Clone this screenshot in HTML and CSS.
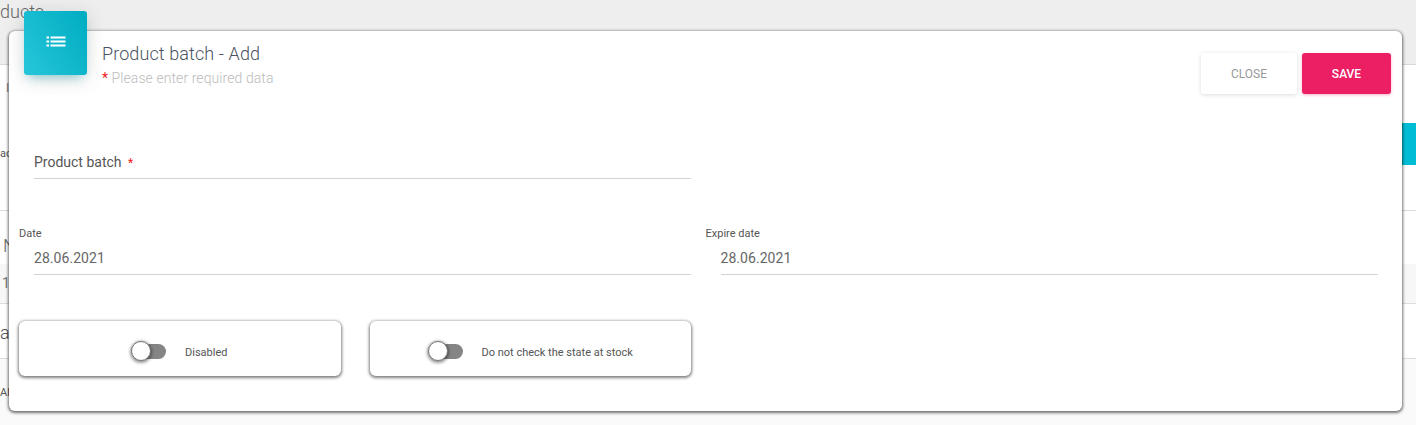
FILE: index.html
```html
<!DOCTYPE html>
<html lang="en">
<head>
    <meta charset="UTF-8">
    <meta name="viewport" content="width=device-width, initial-scale=1.0">
    <title>Product batch - Add</title>
    <link rel="stylesheet" href="styles.css">
</head>
<body>
    <!-- page behind the dialog, only its edges show -->
    <div class="backdrop">
        <div class="top-band"><span class="page-title">ducts</span></div>
        <div class="bg-toolbar">
            <span class="bg-tick">I</span>
            <div class="bg-action"></div>
            <span class="bg-small">ac</span>
        </div>
        <div class="bg-head"><span class="bg-big">N</span></div>
        <div class="bg-row"><span class="bg-num">1</span></div>
        <div class="bg-name"><span class="bg-large">a</span></div>
        <div class="bg-last"><span class="bg-small">AM</span></div>
    </div>

    <div class="modal">
        <div class="modal-tile">
            <svg width="20" height="20" viewBox="0 0 20 20" fill="#fff">
                <rect x="0.5" y="3.5" width="2.5" height="2"/>
                <rect x="4.5" y="3.5" width="15" height="2"/>
                <rect x="0.5" y="7.5" width="2.5" height="2"/>
                <rect x="4.5" y="7.5" width="15" height="2"/>
                <rect x="0.5" y="11.5" width="2.5" height="2"/>
                <rect x="4.5" y="11.5" width="15" height="2"/>
            </svg>
        </div>

        <div class="modal-header">
            <div class="modal-heading">
                <h4 class="modal-title">Product batch - Add</h4>
                <p class="modal-sub"><span class="req">*</span> Please enter required data</p>
            </div>
            <div class="modal-actions">
                <button class="btn btn-close">Close</button>
                <button class="btn btn-save">Save</button>
            </div>
        </div>

        <div class="form-grid">
            <div class="field field-plain">
                <span class="field-text">Product batch <span class="req req-field">*</span></span>
            </div>
        </div>

        <div class="form-grid date-row">
            <div class="date-col">
                <label class="small-label">Date</label>
                <div class="field"><span class="field-value">28.06.2021</span></div>
            </div>
            <div class="date-col">
                <label class="small-label">Expire date</label>
                <div class="field"><span class="field-value">28.06.2021</span></div>
            </div>
        </div>

        <div class="toggle-row">
            <div class="toggle-card">
                <div class="toggle-wrap toggle-wrap-a">
                    <span class="toggle"><span class="toggle-knob"></span></span>
                    <span class="toggle-label">Disabled</span>
                </div>
            </div>
            <div class="toggle-card">
                <div class="toggle-wrap toggle-wrap-b">
                    <span class="toggle"><span class="toggle-knob"></span></span>
                    <span class="toggle-label">Do not check the state at stock</span>
                </div>
            </div>
        </div>
    </div>
</body>
</html>
```

FILE: styles.css
```css
html, body {
    height: 425px;
    overflow: hidden;
}
body {
    margin: 0;
    font-family: Roboto, "Liberation Sans", sans-serif;
    background-color: #fafafa;
    color: #555;
}

/* backdrop */
.backdrop {
    height: 425px;
}
.top-band {
    height: 64px;
    background-color: #eeeeee;
    border-bottom: 1px solid #d8d8d8;
    color: #666;
}
.page-title {
    display: block;
    padding-top: 1px;
    font-size: 18px;
    font-weight: 300;
    line-height: 22px;
}
.bg-toolbar {
    height: 145px;
    background-color: #fff;
    border-bottom: 1px solid #ddd;
    position: relative;
}
.bg-tick {
    display: block;
    height: 58px;
    padding-top: 16px;
    margin-left: 6px;
    font-size: 12px;
    color: #888;
    box-sizing: border-box;
}
.bg-action {
    height: 42px;
    margin-left: auto;
    width: 40px;
    background-color: #00bcd4;
}
.bg-toolbar .bg-small {
    position: absolute;
    left: 0;
    top: 82px;
}
.bg-small {
    font-size: 11px;
    color: #555;
}
.bg-head {
    height: 53px;
    background-color: #fff;
}
.bg-big {
    display: block;
    margin-left: 3px;
    padding-top: 24px;
    font-size: 18px;
    line-height: 22px;
    font-weight: 300;
    color: #666;
}
.bg-row {
    height: 39px;
    background-color: #f7f7f7;
    border-bottom: 1px solid #ddd;
}
.bg-num {
    display: block;
    margin-left: 2px;
    padding-top: 11px;
    font-size: 14px;
    line-height: 16px;
    color: #777;
}
.bg-name {
    height: 54px;
    background-color: #fff;
    border-bottom: 1px solid #ddd;
}
.bg-large {
    display: block;
    padding-top: 18px;
    font-size: 18px;
    line-height: 22px;
    font-weight: 300;
    color: #555;
}
.bg-last .bg-small {
    display: block;
    padding-top: 27px;
}

/* dialog */
.modal {
    position: absolute;
    left: 9px;
    top: 31px;
    width: 1393px;
    height: 380px;
    box-sizing: border-box;
    padding: 0 10px;
    background-color: #fff;
    border-radius: 6px;
    box-shadow: 0 1px 3px 1px rgba(0,0,0,0.55);
}
.modal-tile {
    position: absolute;
    left: 15px;
    top: -20px;
    width: 63px;
    height: 64px;
    display: flex;
    align-items: center;
    justify-content: center;
    border-radius: 3px;
    background: linear-gradient(60deg, #26c6da, #00acc1);
    box-shadow: 0 4px 20px 0 rgba(0,0,0,0.14), 0 7px 10px -5px rgba(0,172,193,0.4);
}
.modal-header {
    display: flex;
    justify-content: space-between;
    height: 94px;
}
.modal-heading {
    padding: 12px 0 0 83px;
}
.modal-title {
    margin: 0;
    font-size: 18px;
    font-weight: 300;
    line-height: 22px;
    letter-spacing: 0.1px;
    color: #4a5361;
}
.modal-sub {
    margin: 4px 0 0;
    font-size: 14px;
    font-weight: 300;
    line-height: 18px;
    letter-spacing: 0.08px;
    color: #bbb;
}
.req {
    color: #f21c1c;
    font-weight: 400;
}
.modal-actions {
    display: flex;
    gap: 5px;
    padding: 22px 1px 0 0;
}
.btn {
    height: 41px;
    border: none;
    border-radius: 3px;
    font-family: inherit;
    font-size: 12px;
    font-weight: 500;
    text-transform: uppercase;
    cursor: pointer;
}
.btn-close {
    width: 96px;
    background-color: #fff;
    color: #999;
    font-weight: 400;
    box-shadow: 0 1px 4px rgba(0,0,0,0.14);
}
.btn-save {
    width: 89px;
    background-color: #ed1f64;
    color: #fff;
    box-shadow: 0 1px 3px rgba(233,30,99,0.35);
}

.form-grid {
    display: grid;
    grid-template-columns: 686.5px 672px;
}
.field {
    margin-left: 15px;
    width: 657px;
    height: 25px;
    border-bottom: 1px solid #d2d2d2;
    line-height: 18px;
}
.field-plain {
    margin-top: 28px;
}
.field-text {
    font-size: 14px;
    color: #555;
}
.req-field {
    margin-left: 3px;
    font-size: 12px;
}
.field-value {
    font-size: 14px;
    color: #666;
    letter-spacing: 0.05px;
}
.date-row {
    margin-top: 48px;
}
.small-label {
    display: block;
    height: 16px;
    font-size: 11px;
    line-height: 14px;
    color: #555;
}
.date-col .field {
    height: 25px;
    padding-top: 6px;
}

.toggle-row {
    display: flex;
    gap: 29px;
    margin-top: 46px;
}
.toggle-card {
    width: 321.5px;
    height: 55px;
    display: flex;
    align-items: center;
    background-color: #fff;
    border-radius: 6px;
    box-shadow: 0 1px 3px 1px rgba(0,0,0,0.5);
}
.toggle-wrap {
    display: flex;
    align-items: center;
    margin-top: 6px;
}
.toggle-wrap-a {
    padding-left: 112px;
}
.toggle-wrap-b {
    padding-left: 58px;
}
.toggle {
    position: relative;
    display: block;
    width: 30px;
    height: 15px;
    margin-left: 5px;
    border-radius: 8px;
    background-color: #858585;
}
.toggle-knob {
    position: absolute;
    left: -5px;
    top: -3px;
    width: 18px;
    height: 18px;
    background-color: #fff;
    border: 1px solid #777;
    border-radius: 50%;
    box-shadow: 0 1px 3px 1px rgba(0,0,0,0.4);
}
.toggle-label {
    margin: 2px 0 0 19px;
    font-size: 11px;
    line-height: 14px;
    color: #555;
}
```
